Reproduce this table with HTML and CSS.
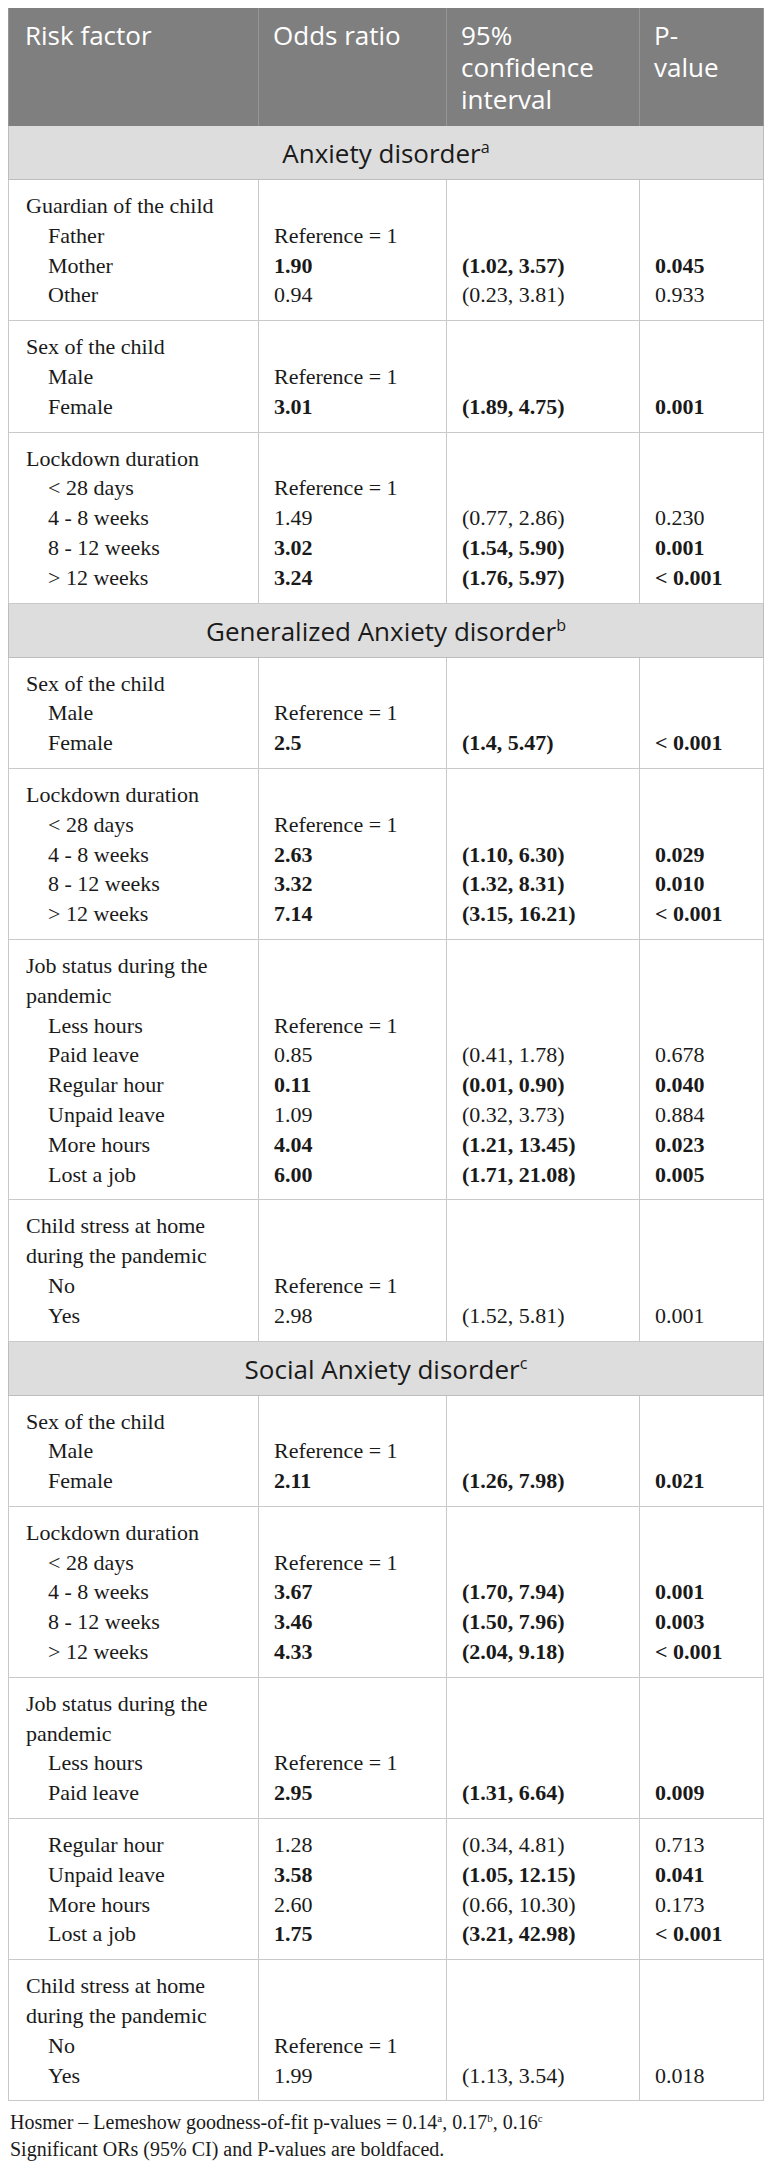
FILE: index.html
```html
<!DOCTYPE html>
<html lang="en">
<head>
<meta charset="utf-8">
<title>Risk factors table</title>
<link rel="stylesheet" href="styles.css">
</head>
<body>
<table class="risk">
  <colgroup>
    <col class="c1"><col class="c2"><col class="c3"><col class="c4">
  </colgroup>
  <thead>
    <tr>
      <th>Risk factor</th>
      <th>Odds ratio</th>
      <th>95%<br>confidence<br>interval</th>
      <th>P-<br>value</th>
    </tr>
  </thead>

  <tbody class="sec"><tr><td colspan="4">Anxiety disorder<sup>a</sup></td></tr></tbody>

  <tbody class="grp">
    <tr><td>Guardian of the child</td><td></td><td></td><td></td></tr>
    <tr><td class="ind">Father</td><td>Reference = 1</td><td></td><td></td></tr>
    <tr><td class="ind">Mother</td><td class="b">1.90</td><td class="b">(1.02, 3.57)</td><td class="b">0.045</td></tr>
    <tr><td class="ind">Other</td><td>0.94</td><td>(0.23, 3.81)</td><td>0.933</td></tr>
  </tbody>
  <tbody class="grp">
    <tr><td>Sex of the child</td><td></td><td></td><td></td></tr>
    <tr><td class="ind">Male</td><td>Reference = 1</td><td></td><td></td></tr>
    <tr><td class="ind">Female</td><td class="b">3.01</td><td class="b">(1.89, 4.75)</td><td class="b">0.001</td></tr>
  </tbody>
  <tbody class="grp">
    <tr><td>Lockdown duration</td><td></td><td></td><td></td></tr>
    <tr><td class="ind">&lt; 28 days</td><td>Reference = 1</td><td></td><td></td></tr>
    <tr><td class="ind">4 - 8 weeks</td><td>1.49</td><td>(0.77, 2.86)</td><td>0.230</td></tr>
    <tr><td class="ind">8 - 12 weeks</td><td class="b">3.02</td><td class="b">(1.54, 5.90)</td><td class="b">0.001</td></tr>
    <tr><td class="ind">&gt; 12 weeks</td><td class="b">3.24</td><td class="b">(1.76, 5.97)</td><td class="b">&lt; 0.001</td></tr>
  </tbody>

  <tbody class="sec"><tr><td colspan="4">Generalized Anxiety disorder<sup>b</sup></td></tr></tbody>

  <tbody class="grp">
    <tr><td>Sex of the child</td><td></td><td></td><td></td></tr>
    <tr><td class="ind">Male</td><td>Reference = 1</td><td></td><td></td></tr>
    <tr><td class="ind">Female</td><td class="b">2.5</td><td class="b">(1.4, 5.47)</td><td class="b">&lt; 0.001</td></tr>
  </tbody>
  <tbody class="grp">
    <tr><td>Lockdown duration</td><td></td><td></td><td></td></tr>
    <tr><td class="ind">&lt; 28 days</td><td>Reference = 1</td><td></td><td></td></tr>
    <tr><td class="ind">4 - 8 weeks</td><td class="b">2.63</td><td class="b">(1.10, 6.30)</td><td class="b">0.029</td></tr>
    <tr><td class="ind">8 - 12 weeks</td><td class="b">3.32</td><td class="b">(1.32, 8.31)</td><td class="b">0.010</td></tr>
    <tr><td class="ind">&gt; 12 weeks</td><td class="b">7.14</td><td class="b">(3.15, 16.21)</td><td class="b">&lt; 0.001</td></tr>
  </tbody>
  <tbody class="grp">
    <tr><td>Job status during the<br>pandemic</td><td></td><td></td><td></td></tr>
    <tr><td class="ind">Less hours</td><td>Reference = 1</td><td></td><td></td></tr>
    <tr><td class="ind">Paid leave</td><td>0.85</td><td>(0.41, 1.78)</td><td>0.678</td></tr>
    <tr><td class="ind">Regular hour</td><td class="b">0.11</td><td class="b">(0.01, 0.90)</td><td class="b">0.040</td></tr>
    <tr><td class="ind">Unpaid leave</td><td>1.09</td><td>(0.32, 3.73)</td><td>0.884</td></tr>
    <tr><td class="ind">More hours</td><td class="b">4.04</td><td class="b">(1.21, 13.45)</td><td class="b">0.023</td></tr>
    <tr><td class="ind">Lost a job</td><td class="b">6.00</td><td class="b">(1.71, 21.08)</td><td class="b">0.005</td></tr>
  </tbody>
  <tbody class="grp">
    <tr><td>Child stress at home<br>during the pandemic</td><td></td><td></td><td></td></tr>
    <tr><td class="ind">No</td><td>Reference = 1</td><td></td><td></td></tr>
    <tr><td class="ind">Yes</td><td>2.98</td><td>(1.52, 5.81)</td><td>0.001</td></tr>
  </tbody>

  <tbody class="sec"><tr><td colspan="4">Social Anxiety disorder<sup>c</sup></td></tr></tbody>

  <tbody class="grp">
    <tr><td>Sex of the child</td><td></td><td></td><td></td></tr>
    <tr><td class="ind">Male</td><td>Reference = 1</td><td></td><td></td></tr>
    <tr><td class="ind">Female</td><td class="b">2.11</td><td class="b">(1.26, 7.98)</td><td class="b">0.021</td></tr>
  </tbody>
  <tbody class="grp">
    <tr><td>Lockdown duration</td><td></td><td></td><td></td></tr>
    <tr><td class="ind">&lt; 28 days</td><td>Reference = 1</td><td></td><td></td></tr>
    <tr><td class="ind">4 - 8 weeks</td><td class="b">3.67</td><td class="b">(1.70, 7.94)</td><td class="b">0.001</td></tr>
    <tr><td class="ind">8 - 12 weeks</td><td class="b">3.46</td><td class="b">(1.50, 7.96)</td><td class="b">0.003</td></tr>
    <tr><td class="ind">&gt; 12 weeks</td><td class="b">4.33</td><td class="b">(2.04, 9.18)</td><td class="b">&lt; 0.001</td></tr>
  </tbody>
  <tbody class="grp">
    <tr><td>Job status during the<br>pandemic</td><td></td><td></td><td></td></tr>
    <tr><td class="ind">Less hours</td><td>Reference = 1</td><td></td><td></td></tr>
    <tr><td class="ind">Paid leave</td><td class="b">2.95</td><td class="b">(1.31, 6.64)</td><td class="b">0.009</td></tr>
  </tbody>
  <tbody class="grp">
    <tr><td class="ind">Regular hour</td><td>1.28</td><td>(0.34, 4.81)</td><td>0.713</td></tr>
    <tr><td class="ind">Unpaid leave</td><td class="b">3.58</td><td class="b">(1.05, 12.15)</td><td class="b">0.041</td></tr>
    <tr><td class="ind">More hours</td><td>2.60</td><td>(0.66, 10.30)</td><td>0.173</td></tr>
    <tr><td class="ind">Lost a job</td><td class="b">1.75</td><td class="b">(3.21, 42.98)</td><td class="b">&lt; 0.001</td></tr>
  </tbody>
  <tbody class="grp">
    <tr><td>Child stress at home<br>during the pandemic</td><td></td><td></td><td></td></tr>
    <tr><td class="ind">No</td><td>Reference = 1</td><td></td><td></td></tr>
    <tr><td class="ind">Yes</td><td>1.99</td><td>(1.13, 3.54)</td><td>0.018</td></tr>
  </tbody>
</table>
<div class="notes">
  <p>Hosmer – Lemeshow goodness-of-fit p-values = 0.14<sup>a</sup>, 0.17<sup>b</sup>, 0.16<sup>c</sup></p>
  <p>Significant ORs (95% CI) and P-values are boldfaced.</p>
</div>
</body>
</html>
```

FILE: styles.css
```css
body {
  margin: 8px;
  background: #ffffff;
  color: #1a1a1a;
}

.risk {
  border-collapse: collapse;
  table-layout: fixed;
  width: 755px;
  font-family: "Liberation Serif", "Times New Roman", serif;
  font-size: 22px;
}

.c1 { width: 250px; }
.c2 { width: 188px; }
.c3 { width: 193px; }
.c4 { width: 124px; }

.risk th {
  background: #7f7f7f;
  color: #ffffff;
  font-family: "Open Sans", "Noto Sans", sans-serif;
  font-weight: 400;
  font-size: 26px;
  line-height: 32px;
  text-align: left;
  vertical-align: top;
  padding: 11px 8px 11px 14px;
  border-left: 1px solid #969696;
  border-right: 1px solid #969696;
}
.risk th:first-child { padding-left: 16px; }

.sec td {
  background: #dddddd;
  color: #1a1a1a;
  font-family: "Open Sans", "Noto Sans", sans-serif;
  font-size: 26px;
  line-height: 30px;
  text-align: center;
  padding: 12px 10px 11px;
  border: 1px solid #bdbdbd;
  border-top: 0;
}

sup {
  font-size: 62%;
  line-height: 0;
  vertical-align: 0.65em;
}

.grp {
  border: 1px solid #c9c9c9;
}

.grp td {
  line-height: 29.8px;
  padding: 0 8px 0 15px;
  vertical-align: top;
  white-space: nowrap;
  border-left: 1px solid #c9c9c9;
  border-right: 1px solid #c9c9c9;
}
.grp td:first-child { padding-left: 17px; }
.grp td.ind { padding-left: 39px; }
.grp tr:first-child td { padding-top: 11px; }
.grp tr:last-child td { padding-bottom: 10px; }

.b { font-weight: 700; }

.notes {
  margin-top: 8px;
  padding-left: 2px;
  font-family: "Liberation Serif", "Times New Roman", serif;
  font-size: 20px;
  line-height: 27px;
}
.notes p { margin: 0; }
.notes sup { font-size: 55%; }
```
